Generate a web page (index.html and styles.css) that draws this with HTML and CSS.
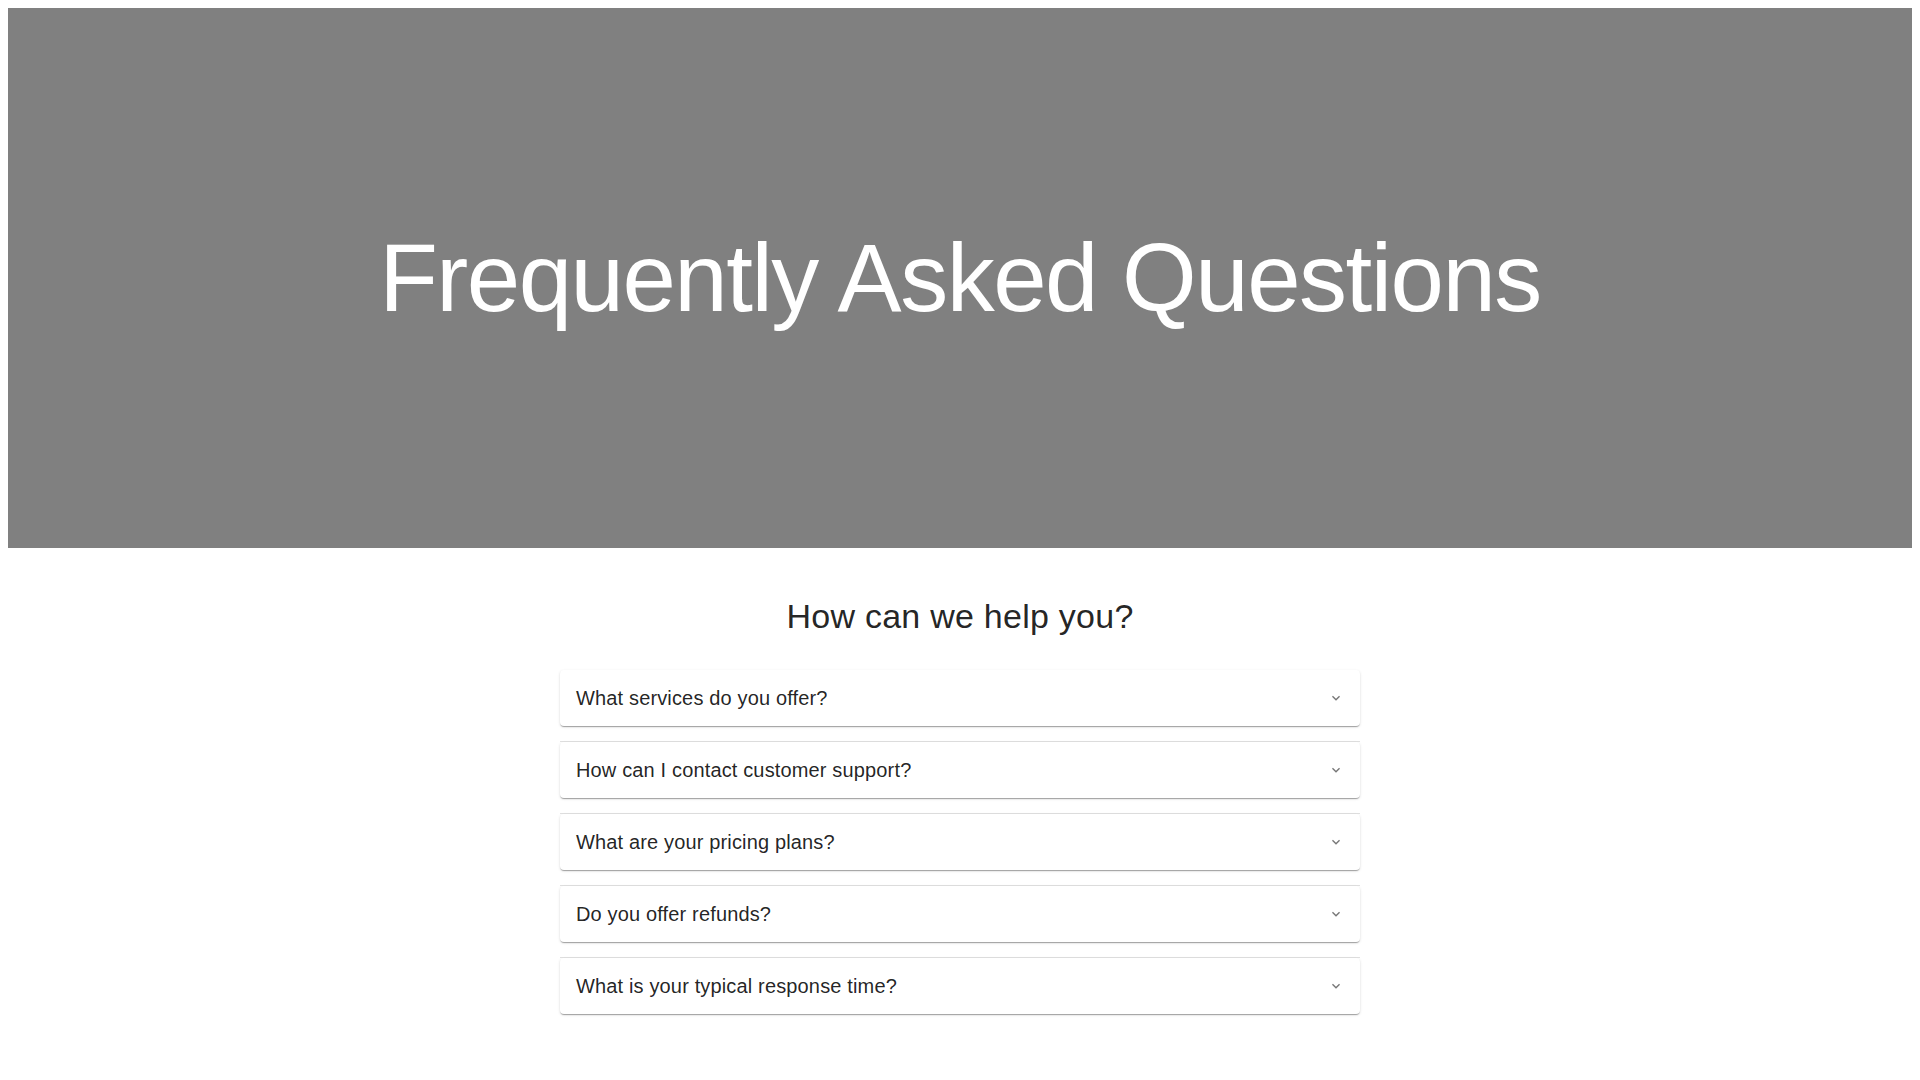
FILE: index.html
```html
<!DOCTYPE html>
<html lang="en">
<head>
<meta charset="utf-8">
<title>FAQ</title>
<link rel="stylesheet" href="styles.css">
</head>
<body>
<header class="hero">
  <h1 class="hero-title">Frequently Asked Questions</h1>
</header>
<main class="faq">
  <h2 class="faq-heading">How can we help you?</h2>
  <div class="faq-list">
    <div class="acc">
      <div class="acc-summary">
        <span class="acc-q">What services do you offer?</span>
        <svg class="acc-icon" viewBox="0 0 24 24" aria-hidden="true"><path d="M16.59 8.59 12 13.17 7.41 8.59 6 10l6 6 6-6z"/></svg>
      </div>
    </div>
    <div class="acc">
      <div class="acc-summary">
        <span class="acc-q">How can I contact customer support?</span>
        <svg class="acc-icon" viewBox="0 0 24 24" aria-hidden="true"><path d="M16.59 8.59 12 13.17 7.41 8.59 6 10l6 6 6-6z"/></svg>
      </div>
    </div>
    <div class="acc">
      <div class="acc-summary">
        <span class="acc-q">What are your pricing plans?</span>
        <svg class="acc-icon" viewBox="0 0 24 24" aria-hidden="true"><path d="M16.59 8.59 12 13.17 7.41 8.59 6 10l6 6 6-6z"/></svg>
      </div>
    </div>
    <div class="acc">
      <div class="acc-summary">
        <span class="acc-q">Do you offer refunds?</span>
        <svg class="acc-icon" viewBox="0 0 24 24" aria-hidden="true"><path d="M16.59 8.59 12 13.17 7.41 8.59 6 10l6 6 6-6z"/></svg>
      </div>
    </div>
    <div class="acc">
      <div class="acc-summary">
        <span class="acc-q">What is your typical response time?</span>
        <svg class="acc-icon" viewBox="0 0 24 24" aria-hidden="true"><path d="M16.59 8.59 12 13.17 7.41 8.59 6 10l6 6 6-6z"/></svg>
      </div>
    </div>
  </div>
</main>
</body>
</html>
```

FILE: styles.css
```css
body {
  margin: 8px;
  background: #ffffff;
  font-family: "Liberation Sans", Arial, Helvetica, sans-serif;
  color: rgba(0, 0, 0, 0.87);
}

.hero {
  height: 540px;
  background: #808080;
  display: flex;
  align-items: center;
  justify-content: center;
}

.hero-title {
  margin: 0;
  color: #ffffff;
  font-size: 96px;
  font-weight: 300;
  line-height: 1.167;
  letter-spacing: -0.01562em;
}

.faq {
  width: 800px;
  margin: 0 auto;
  padding: 48px 0 32px;
}

.faq-heading {
  margin: 0 0 32px;
  text-align: center;
  font-size: 34px;
  font-weight: 400;
  line-height: 1.235;
  letter-spacing: 0.00735em;
}

.faq-list {
  display: flex;
  flex-direction: column;
  gap: 16px;
}

.acc {
  position: relative;
  background: #ffffff;
  border-radius: 4px;
  box-shadow: 0px 2px 1px -1px rgba(0, 0, 0, 0.2), 0px 1px 1px 0px rgba(0, 0, 0, 0.14), 0px 1px 3px 0px rgba(0, 0, 0, 0.12);
}

.acc + .acc::before {
  content: "";
  position: absolute;
  left: 0;
  right: 0;
  top: -1px;
  height: 1px;
  background: rgba(0, 0, 0, 0.12);
}

.acc-summary {
  display: flex;
  align-items: center;
  justify-content: space-between;
  min-height: 56px;
  padding: 0 16px;
  box-sizing: border-box;
}

.acc-q {
  font-size: 20px;
  font-weight: 500;
  line-height: 1.6;
  letter-spacing: 0.0075em;
}

.acc-icon {
  width: 16px;
  height: 16px;
  fill: rgba(0, 0, 0, 0.54);
  flex-shrink: 0;
}
```
